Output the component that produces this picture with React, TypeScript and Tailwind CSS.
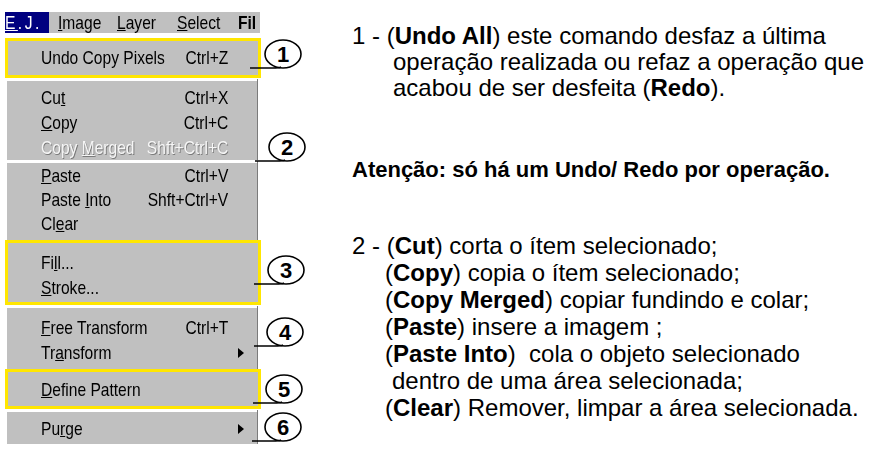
import React from 'react';

type Item = {
	label: React.ReactNode;
	shortcut?: string;
	arrow?: boolean;
	disabled?: boolean;
};

const sans = { fontFamily: '"Liberation Sans", Arial, sans-serif' };

// squeezes the text a bit so it looks like the old bitmap menu font
function Narrow({ children, right }: { children: React.ReactNode; right?: boolean }) {
	return (
		<span className={'inline-block scale-x-[0.82] whitespace-nowrap ' + (right ? 'origin-right' : 'origin-left')}>
			{children}
		</span>
	);
}

function MenuRow({ item, h }: { item: Item; h: number }) {
	return (
		<div
			className={
				'flex items-center text-[19px] leading-none ' +
				(item.disabled ? 'text-[#f6f6f6] [text-shadow:1px_1px_0_#7a7a7a]' : 'text-black')
			}
			style={{ height: h }}
		>
			<span className="w-[110px] shrink-0">
				<Narrow>{item.label}</Narrow>
			</span>
			<span className="flex w-[77px] shrink-0 justify-end">
				{item.shortcut && <Narrow right>{item.shortcut}</Narrow>}
			</span>
			{item.arrow && (
				<svg width="6" height="10" viewBox="0 0 6 10" className="ml-[10px]">
					<path d="M0 0 L6 5 L0 10 Z" fill="black" />
				</svg>
			)}
		</div>
	);
}

function GraySection({ items, pt, pb, rowH = 25 }: { items: Item[]; pt: number; pb: number; rowH?: number }) {
	return (
		<div className="ml-[2px] w-[251px] border-r border-[#7b7b7b] bg-[#c0c0c0]">
			<div className="mt-[1px] h-[2px] bg-white" />
			<div className="pl-[34px]" style={{ paddingTop: pt, paddingBottom: pb }}>
				{items.map((it, i) => (
					<MenuRow key={i} item={it} h={rowH} />
				))}
			</div>
		</div>
	);
}

function YellowBox({ items, h, pt }: { items: Item[]; h: number; pt: number }) {
	return (
		<div className="w-[256px] border-[3px] border-[#ffe600] bg-[#c0c0c0] pl-[33px]" style={{ height: h, paddingTop: pt }}>
			{items.map((it, i) => (
				<MenuRow key={i} item={it} h={25} />
			))}
		</div>
	);
}

function Callout({ n, x, y, from }: { n: number; x: number; y: number; from: number }) {
	// ellipse box is 38x29 at (x, y); the leader line starts at `from`
	const w = x + 40 - from;
	const cx = x - from + 19;
	return (
		<svg className="absolute" style={{ left: from, top: y }} width={w} height={32} viewBox={`0 0 ${w} 32`}>
			<ellipse cx={cx} cy={15} rx={18} ry={14} fill="white" stroke="black" strokeWidth={1.6} />
			<path d={`M0 29 L${cx - 10} 29 Q${cx - 4} 29 ${cx - 2} 28`} fill="none" stroke="black" strokeWidth={1.4} />
			<text
				x={cx}
				y={23}
				textAnchor="middle"
				fontFamily='"Liberation Sans", Arial, sans-serif'
				fontWeight="bold"
				fontSize="22"
				fill="black"
			>
				{n}
			</text>
		</svg>
	);
}

export default function App() {
	return (
		<div className="flex h-[450px] w-[874px] overflow-hidden bg-white" style={sans}>
			{/* menu figure */}
			<div className="relative w-[352px] shrink-0 pl-[5px] pt-[12px]">
				<div className="flex h-[21px] w-[255px] items-center overflow-hidden bg-[#c0c0c0] text-[19px] leading-none">
					<div className="flex h-full w-[44px] items-center justify-center bg-[#000080] text-white">
						<Narrow>
							<span className="tracking-[3px]">
								<u>E</u>.J.
							</span>
						</Narrow>
					</div>
					<span className="ml-[9px] w-[60px]">
						<Narrow>
							<u>I</u>mage
						</Narrow>
					</span>
					<span className="w-[61px]">
						<Narrow>
							<u>L</u>ayer
						</Narrow>
					</span>
					<span className="w-[62px]">
						<Narrow>
							<u>S</u>elect
						</Narrow>
					</span>
					<span className="font-bold">
						<Narrow>Fil</Narrow>
					</span>
				</div>
				<div className="h-[5px]" />
				<YellowBox h={40} pt={4} items={[{ label: 'Undo Copy Pixels', shortcut: 'Ctrl+Z' }]} />
				<GraySection
					pt={4}
					pb={0}
					items={[
						{ label: <>Cu<u>t</u></>, shortcut: 'Ctrl+X' },
						{ label: <><u>C</u>opy</>, shortcut: 'Ctrl+C' },
						{ label: <>Copy <u>M</u>erged</>, shortcut: 'Shft+Ctrl+C', disabled: true },
					]}
				/>
				<GraySection
					pt={0}
					pb={5}
					rowH={24}
					items={[
						{ label: <><u>P</u>aste</>, shortcut: 'Ctrl+V' },
						{ label: <>Paste <u>I</u>nto</>, shortcut: 'Shft+Ctrl+V' },
						{ label: <>Cl<u>e</u>ar</> },
					]}
				/>
				<YellowBox
					h={65}
					pt={7}
					items={[{ label: <>Fi<u>l</u>l...</> }, { label: <><u>S</u>troke...</> }]}
				/>
				<GraySection
					pt={7}
					pb={4}
					items={[
						{ label: <><u>F</u>ree Transform</>, shortcut: 'Ctrl+T' },
						{ label: <>Tr<u>a</u>nsform</>, arrow: true },
					]}
				/>
				<YellowBox h={40} pt={5} items={[{ label: <><u>D</u>efine Pattern</> }]} />
				<GraySection pt={4} pb={3} items={[{ label: <>Pu<u>r</u>ge</>, arrow: true }]} />

				<Callout n={1} x={264} y={39} from={250} />
				<Callout n={2} x={268} y={132} from={255} />
				<Callout n={3} x={267} y={255} from={254} />
				<Callout n={4} x={266} y={317} from={254} />
				<Callout n={5} x={265} y={374} from={253} />
				<Callout n={6} x={264} y={412} from={252} />
			</div>

			{/* explanation text */}
			<div className="flex-1 pt-[23px] text-[24px] leading-[26px] text-black">
				<div>
					1 - (<b>Undo All</b>) este comando desfaz a última
				</div>
				<div className="pl-[41px]">operação realizada ou refaz a operação que</div>
				<div className="pl-[41px]">
					acabou de ser desfeita (<b>Redo</b>).
				</div>

				<div className="mt-[56px] text-[22px] font-bold">Atenção: só há um Undo/ Redo por operação.</div>

				<div className="mt-[49px] leading-[27px]">
					<div>
						2 - (<b>Cut</b>) corta o ítem selecionado;
					</div>
					<div className="pl-[33px]">
						(<b>Copy</b>) copia o ítem selecionado;
					</div>
					<div className="pl-[33px]">
						(<b>Copy Merged</b>) copiar fundindo e colar;
					</div>
					<div className="pl-[33px]">
						(<b>Paste</b>) insere a imagem ;
					</div>
					<div className="pl-[33px]">
						(<b>Paste Into</b>)&nbsp; cola o objeto selecionado
					</div>
					<div className="pl-[40px]">dentro de uma área selecionada;</div>
					<div className="pl-[33px]">
						(<b>Clear</b>) Remover, limpar a área selecionada.
					</div>
				</div>
			</div>
		</div>
	);
}
